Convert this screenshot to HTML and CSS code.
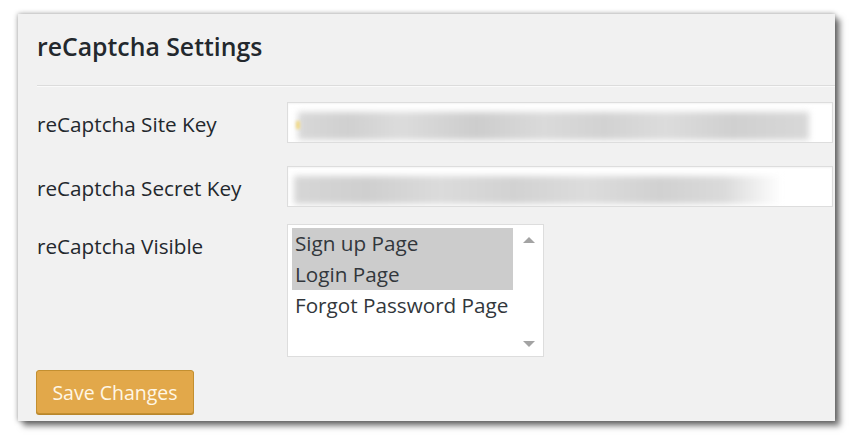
FILE: index.html
```html
<!DOCTYPE html>
<html>
<head>
<meta charset="utf-8">
<link rel="stylesheet" href="styles.css">
</head>
<body>
<div class="panel">
  <h2 class="title">reCaptcha Settings</h2>
  <div class="sep"></div>
  <div class="form">
    <div class="row row-site">
      <label class="label">reCaptcha Site Key</label>
      <div class="input"><div class="blur blur-site"></div><div class="blur-dot"></div></div>
    </div>
    <div class="row row-secret">
      <label class="label">reCaptcha Secret Key</label>
      <div class="input"><div class="blur blur-secret"></div></div>
    </div>
    <div class="row row-visible">
      <label class="label">reCaptcha Visible</label>
      <div class="listbox">
        <div class="options">
          <div class="option selected">Sign up Page</div>
          <div class="option selected">Login Page</div>
          <div class="option">Forgot Password Page</div>
        </div>
        <div class="scrollbar">
          <span class="arrow up"></span>
          <span class="arrow down"></span>
        </div>
      </div>
    </div>
    <div class="actions">
      <button class="button">Save Changes</button>
    </div>
  </div>
</div>
</body>
</html>
```
FILE: styles.css
```css
html, body {
  margin: 0;
  padding: 0;
  background: #ffffff;
}
body {
  width: 853px;
  height: 436px;
  overflow: hidden;
  font-family: "Open Sans", "Noto Sans", sans-serif;
  color: #23282d;
}
.panel {
  margin: 14px 0 0 18px;
  width: 817px;
  height: 407px;
  background: #f1f1f1;
  box-shadow: 0 0 5px rgba(0, 0, 0, 0.4), 5px 5px 6px rgba(0, 0, 0, 0.5);
  padding-left: 19px;
  box-sizing: border-box;
  overflow: hidden;
}
.title {
  margin: 0;
  padding-top: 16px;
  font-size: 24.8px;
  line-height: 32px;
  font-weight: 600;
  color: #23282d;
}
.sep {
  margin-top: 23px;
  height: 0;
  border-top: 1px solid #dcdcdc;
  border-bottom: 1px solid #fafafa;
}
.form {
  padding-top: 15px;
  display: flex;
  flex-direction: column;
}
.row {
  display: grid;
  grid-template-columns: 250px 1fr;
  align-items: start;
}
.row-secret { margin-top: 23px; }
.row-visible { margin-top: 17px; }
.label {
  padding-top: 9px;
  font-size: 20.7px;
  line-height: 26px;
  color: #23282d;
}
.input {
  position: relative;
  width: 546px;
  height: 41px;
  box-sizing: border-box;
  background: #fff;
  border: 1px solid #dddddd;
  box-shadow: inset 0 1px 2px rgba(0, 0, 0, 0.05);
  overflow: hidden;
}
.blur {
  position: absolute;
  top: 9px;
  height: 28px;
  filter: blur(3px);
}
.blur-site {
  left: 10px;
  width: 511px;
  background: linear-gradient(90deg, #d8d8d8 0%, #d0d0d0 10%, #dcdcdc 20%, #cdcdcd 35%, #dadada 48%, #d2d2d2 60%, #dcdcdc 72%, #d0d0d0 85%, #d8d8d8 100%);
}
.blur-dot {
  position: absolute;
  left: 8px;
  top: 18px;
  width: 4px;
  height: 8px;
  background: #f0d884;
  filter: blur(1.5px);
}
.blur-secret {
  left: 6px;
  width: 488px;
  background: linear-gradient(90deg, #d6d6d6 0%, #cfcfcf 15%, #dbdbdb 30%, #d2d2d2 45%, #dcdcdc 60%, #d1d1d1 75%, #dadada 88%, #ffffff 100%);
}
.listbox {
  width: 257px;
  height: 133px;
  box-sizing: border-box;
  background: #fff;
  border: 1px solid #dddddd;
  display: flex;
  padding: 3px 0 0 4px;
}
.options {
  width: 221px;
  display: flex;
  flex-direction: column;
}
.option {
  height: 31px;
  line-height: 31px;
  padding-left: 3px;
  font-size: 20.7px;
  color: #32373c;
  white-space: nowrap;
}
.option.selected {
  background: #cccccc;
}
.scrollbar {
  flex: 1;
  display: flex;
  flex-direction: column;
  justify-content: space-between;
  align-items: center;
  padding: 9px 0 9px 1px;
}
.arrow {
  width: 0;
  height: 0;
  border-left: 6px solid transparent;
  border-right: 6px solid transparent;
}
.arrow.up { border-bottom: 6px solid #a3a3a3; }
.arrow.down { border-top: 6px solid #a3a3a3; }
.actions {
  margin-top: 13px;
}
.button {
  margin: 0 0 0 -1px;
  width: 158px;
  height: 44px;
  box-sizing: border-box;
  background: #e2a84a;
  border: 1px solid #c38f30;
  border-radius: 3px;
  box-shadow: 0 1px 0 #b8862c;
  color: #fff7e6;
  font-family: "Open Sans", "Noto Sans", sans-serif;
  font-size: 19.5px;
  padding: 0;
}
```
